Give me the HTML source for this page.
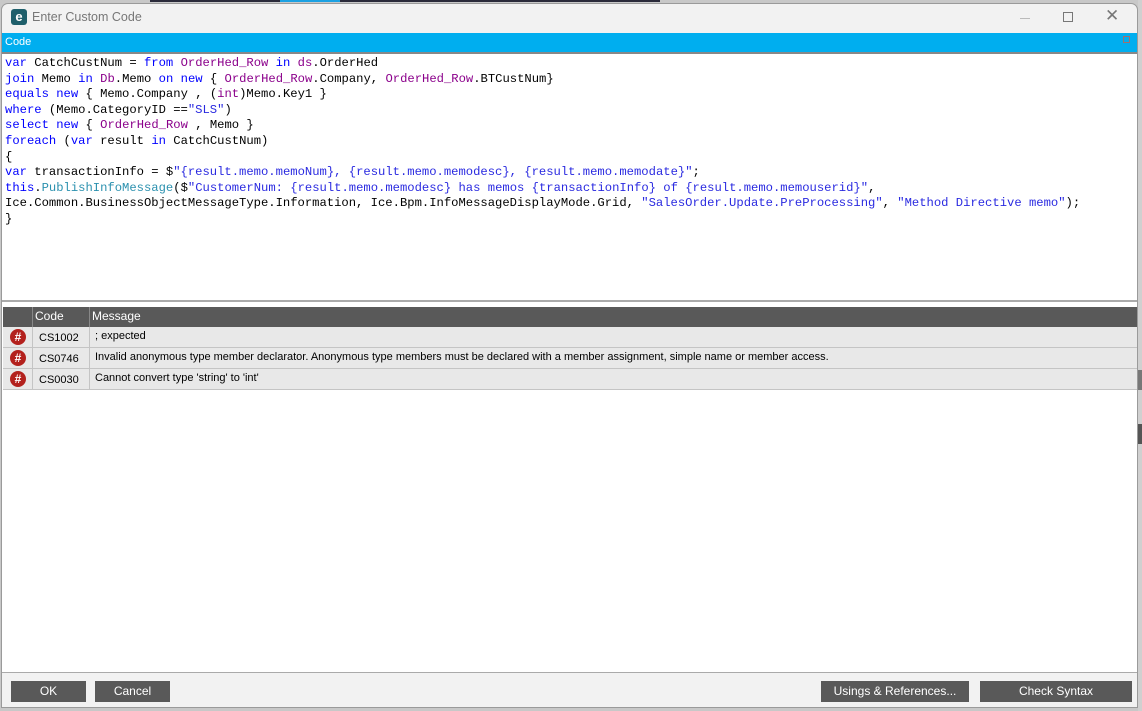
<!DOCTYPE html>
<html><head><style>
*{margin:0;padding:0;box-sizing:border-box}
body{width:1142px;height:711px;background:#c8c8c8;position:relative;overflow:hidden;font-family:"Liberation Sans",sans-serif}
.a{position:absolute}
.win{left:1px;top:3px;width:1137px;height:705px;background:#f2f2f2;border:1px solid #9a9a9a;border-radius:7px 7px 0 0;overflow:hidden}
.code{font-family:"Liberation Mono",monospace;font-size:12.2px;line-height:15.6px;white-space:pre;color:#000}
.k{color:#0000ff}.t{color:#8b008b}.s{color:#2a2ae0}.m{color:#2b91af}
.btn{background:#595959;color:#fff;font-size:12px;text-align:center;line-height:21px;height:21px}
.hdr{background:#595959;color:#fff;font-size:12px;line-height:19px}
.row{background:#e8e8e8;border-bottom:1px solid #c4c4c4;height:21px;font-size:11px}
.cell{position:absolute;top:0;height:20px;line-height:20px;border-right:1px solid #c4c4c4}
.ic{width:16px;height:16px;border-radius:50%;background:#b3211d;color:#fff;font-weight:bold;font-size:12px;line-height:16px;text-align:center;position:absolute;left:7px;top:2px}
</style></head><body>
<div class="a" style="left:150px;top:0;width:510px;height:2px;background:#2a2a3a"></div>
<div class="a" style="left:280px;top:0;width:60px;height:2px;background:#1ba1e2"></div>
<div class="a" style="left:1138px;top:0;width:4px;height:711px;background:#d0d0d0"></div>
<div class="a" style="left:1138px;top:370px;width:4px;height:20px;background:#777"></div>
<div class="a" style="left:1138px;top:424px;width:4px;height:20px;background:#555"></div>
<div class="a win">
 <div class="a" style="left:9px;top:5px;width:16px;height:16px;background:#1f5f6b;border-radius:3px;color:#fff;font-size:13px;font-weight:bold;line-height:15px;text-align:center">e</div>
 <div class="a" style="left:30px;top:6px;font-size:12.5px;color:#777">Enter Custom Code</div>
 <div class="a" style="left:1018px;top:14px;width:10px;height:1px;background:#bbb"></div>
 <div class="a" style="left:1061px;top:8px;width:10px;height:10px;border:1px solid #777"></div>
 <div class="a" style="left:1103px;top:2px;font-size:17px;color:#777">✕</div>
 <div class="a" style="left:0;top:29px;width:1136px;height:19px;background:#00aeef;color:#fff;font-size:11px;line-height:19px;padding-left:3px">Code</div>
 <div class="a" style="left:1121px;top:32px;width:7px;height:7px;border:1px solid #a07070"></div>
 <div class="a" style="left:0;top:48px;width:1136px;height:2px;background:#888"></div>
 <div class="a" style="left:0;top:50px;width:1136px;height:246px;background:#fff"></div>
 <div class="a code" style="left:3px;top:52px"><span class="k">var</span> CatchCustNum = <span class="k">from</span> <span class="t">OrderHed_Row</span> <span class="k">in</span> <span class="t">ds</span>.OrderHed
<span class="k">join</span> Memo <span class="k">in</span> <span class="t">Db</span>.Memo <span class="k">on</span> <span class="k">new</span> { <span class="t">OrderHed_Row</span>.Company, <span class="t">OrderHed_Row</span>.BTCustNum}
<span class="k">equals</span> <span class="k">new</span> { Memo.Company , (<span class="t">int</span>)Memo.Key1 }
<span class="k">where</span> (Memo.CategoryID ==<span class="s">"SLS"</span>)
<span class="k">select</span> <span class="k">new</span> { <span class="t">OrderHed_Row</span> , Memo }
<span class="k">foreach</span> (<span class="k">var</span> result <span class="k">in</span> CatchCustNum)
{
<span class="k">var</span> transactionInfo = $<span class="s">"{result.memo.memoNum}, {result.memo.memodesc}, {result.memo.memodate}"</span>;
<span class="k">this</span>.<span class="m">PublishInfoMessage</span>($<span class="s">"CustomerNum: {result.memo.memodesc} has memos {transactionInfo} of {result.memo.memouserid}"</span>,
Ice.Common.BusinessObjectMessageType.Information, Ice.Bpm.InfoMessageDisplayMode.Grid, <span class="s">"SalesOrder.Update.PreProcessing"</span>, <span class="s">"Method Directive memo"</span>);
}</div>
 <div class="a" style="left:0;top:296px;width:1136px;height:2px;background:#aaa"></div>
 <div class="a" style="left:0;top:298px;width:1136px;height:371px;background:#fff"></div>
 <div class="a hdr" style="left:1px;top:303px;width:1134px;height:20px">
  <div class="a" style="left:29px;top:0;width:1px;height:20px;background:#888"></div>
  <div class="a" style="left:86px;top:0;width:1px;height:20px;background:#888"></div>
  <span class="a" style="left:32px;top:0">Code</span><span class="a" style="left:89px;top:0">Message</span>
 </div>
 <div class="a" style="left:1px;top:323px;width:1134px">
  <div class="row a" style="left:0;top:0;width:1134px;position:relative"><div class="cell" style="left:0;width:30px"><div class="ic">#</div></div><div class="cell" style="left:30px;width:57px;padding-left:6px;line-height:22px">CS1002</div><div class="a" style="left:92px;top:0;line-height:18px">; expected</div></div>
  <div class="row" style="position:relative"><div class="cell" style="left:0;width:30px"><div class="ic">#</div></div><div class="cell" style="left:30px;width:57px;padding-left:6px;line-height:22px">CS0746</div><div class="a" style="left:92px;top:0;line-height:18px">Invalid anonymous type member declarator. Anonymous type members must be declared with a member assignment, simple name or member access.</div></div>
  <div class="row" style="position:relative"><div class="cell" style="left:0;width:30px"><div class="ic">#</div></div><div class="cell" style="left:30px;width:57px;padding-left:6px;line-height:22px">CS0030</div><div class="a" style="left:92px;top:0;line-height:18px">Cannot convert type 'string' to 'int'</div></div>
 </div>
 <div class="a" style="left:0;top:668px;width:1136px;height:1px;background:#aaa"></div>
 <div class="a btn" style="left:9px;top:677px;width:75px">OK</div>
 <div class="a btn" style="left:93px;top:677px;width:75px">Cancel</div>
 <div class="a btn" style="left:819px;top:677px;width:148px">Usings &amp; References...</div>
 <div class="a btn" style="left:978px;top:677px;width:152px">Check Syntax</div>
</div>
</body></html>
